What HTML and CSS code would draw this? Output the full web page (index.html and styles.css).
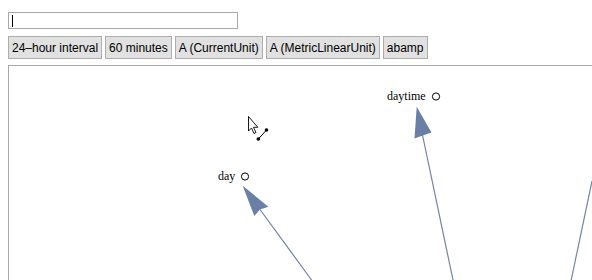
FILE: index.html
```html
<!DOCTYPE html>
<html lang="en">
<head>
    <meta charset="UTF-8">
    <meta name="viewport" content="width=device-width, initial-scale=1.0">
    <title>Unit graph</title>
    <link rel="stylesheet" href="styles.css">
</head>
<body>
    <div class="page">
        <div class="search">
            <input type="text" class="search-input">
            <span class="caret"></span>
        </div>

        <div class="toolbar">
            <button>24–hour interval</button>
            <button>60 minutes</button>
            <button>A (CurrentUnit)</button>
            <button>A (MetricLinearUnit)</button>
            <button>abamp</button>
        </div>

        <div class="canvas">
            <svg class="graph" width="700" height="400" viewBox="9 66 700 400">
                <!-- edges -->
                <g class="edge">
                    <line x1="453" y1="280" x2="422.5" y2="135"/>
                    <polygon points="416.7,106.7 431.5,132.5 422.7,135.5 414.5,138.5"/>
                </g>
                <g class="edge">
                    <line x1="313" y1="282" x2="260" y2="209.5"/>
                    <polygon points="242.7,185.7 268.3,206.7 260,209.5 254.3,216"/>
                </g>
                <g class="edge">
                    <line x1="592" y1="181" x2="571" y2="281"/>
                </g>

                <!-- nodes -->
                <text class="label" x="387" y="100">daytime</text>
                <circle class="node" cx="436" cy="96.5" r="3.6"/>
                <text class="label" x="218" y="180">day</text>
                <circle class="node" cx="245" cy="176.5" r="3.6"/>

                <!-- pointer and link handle -->
                <polygon class="pointer" points="248.5,116.5 248.5,131 251.5,128 254,133.5 256,132.5 253.5,127.3 257.8,127.3"/>
                <line class="handle" x1="258.3" y1="139" x2="266.5" y2="130"/>
                <circle class="handle-dot" cx="258.3" cy="139" r="1.8"/>
                <circle class="handle-dot" cx="266.5" cy="130" r="1.8"/>
            </svg>
        </div>
    </div>
</body>
</html>
```

FILE: styles.css
```css
html, body {
    margin: 0;
    padding: 0;
    background-color: #fff;
    overflow: hidden;
}

body {
    font-family: 'Liberation Sans', Arial, sans-serif;
    font-size: 12px;
    color: #000;
}

.page {
    padding: 12px 0 0 8px;
    width: 800px;
}

.search {
    position: relative;
    width: 230px;
}

.search-input {
    display: block;
    box-sizing: border-box;
    width: 230px;
    height: 17px;
    margin: 0;
    padding: 0 3px;
    border: 1px solid #a8a8a8;
    outline: none;
    font-family: inherit;
    font-size: 12px;
}

.caret {
    position: absolute;
    left: 4px;
    top: 3px;
    width: 1px;
    height: 12px;
    background-color: #000;
}

.toolbar {
    display: flex;
    gap: 3px;
    margin-top: 7px;
}

.toolbar button {
    box-sizing: border-box;
    height: 23px;
    margin: 0;
    padding: 0 3px;
    background-color: #e1e1e1;
    border: 1px solid #adadad;
    border-radius: 0;
    font-family: inherit;
    font-size: 12px;
    color: #000;
    white-space: nowrap;
}

.canvas {
    margin-top: 6px;
    width: 700px;
    height: 400px;
    border-top: 1px solid #a8a8a8;
    border-left: 1px solid #a8a8a8;
}

.graph {
    display: block;
}

.edge line {
    stroke: #6f84a9;
    stroke-width: 1.2;
}

.edge polygon {
    fill: #6a7fa6;
}

.label {
    font-family: 'Liberation Serif', 'Times New Roman', serif;
    font-size: 12px;
    fill: #000;
}

.node {
    fill: #fff;
    stroke: #000;
    stroke-width: 1;
}

.pointer {
    fill: #fff;
    stroke: #000;
    stroke-width: 0.9;
    stroke-linejoin: miter;
}

.handle {
    stroke: #000;
    stroke-width: 1;
}

.handle-dot {
    fill: #000;
}
```
